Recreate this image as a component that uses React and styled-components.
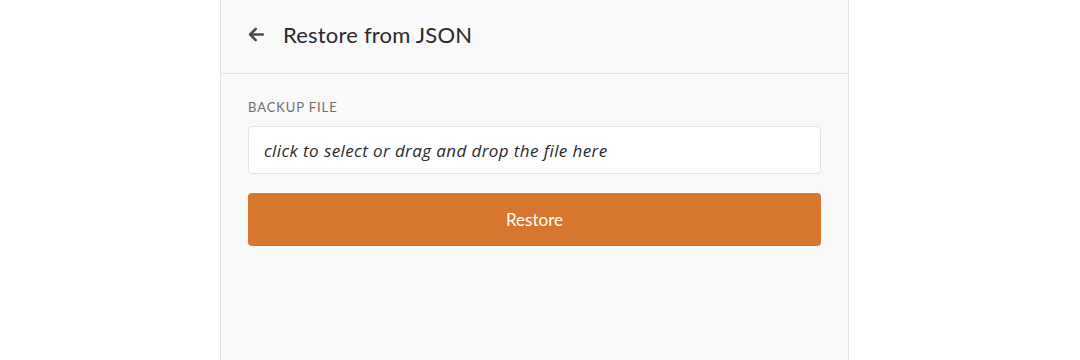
import React from "react";
import styled, { createGlobalStyle } from "styled-components";

const GlobalStyle = createGlobalStyle`
  html, body {
    margin: 0;
    padding: 0;
    background: #ffffff;
    font-family: "Lato", "Open Sans", sans-serif;
  }
`;

const Page = styled.div`
  height: 360px;
  display: flex;
  padding-left: 220px;
`;

const Panel = styled.div`
  width: 627px;
  height: 100%;
  background: #f9f9f9;
  border-left: 1px solid #e2e3ef;
  border-right: 1px solid #e2e3ef;
  display: flex;
  flex-direction: column;
`;

const Header = styled.div`
  height: 74px;
  box-sizing: border-box;
  border-bottom: 1px solid #e2e3ef;
  display: flex;
  align-items: center;
  padding: 0 26px 4px;
  gap: 17px;
`;

const BackArrow = styled.svg`
  width: 19px;
  height: 19px;
  color: #4a4a4a;
  cursor: pointer;
`;

const Title = styled.h1`
  margin: 0;
  font-size: 22px;
  font-weight: 400;
  color: #2a2a2a;
  letter-spacing: 0.2px;
`;

const Body = styled.div`
  padding: 25px 27px;
  display: flex;
  flex-direction: column;
`;

const Label = styled.label`
  font-size: 13px;
  color: #6e6e6e;
  letter-spacing: 0.9px;
  text-transform: uppercase;
  margin-bottom: 11px;
`;

const DropZone = styled.div`
  height: 48px;
  box-sizing: border-box;
  background: #ffffff;
  border: 1px solid #e2e4ec;
  border-radius: 4px;
  display: flex;
  align-items: center;
  padding: 0 15px;
  font-family: "Open Sans", "Lato", sans-serif;
  font-size: 17px;
  font-style: italic;
  letter-spacing: 0.4px;
  color: #2a2a2a;
  cursor: pointer;
`;

const RestoreButton = styled.button`
  margin-top: 19px;
  height: 53px;
  border: none;
  border-radius: 4px;
  background: #d9762d;
  color: #ffffff;
  font-family: inherit;
  font-size: 17px;
  cursor: pointer;
`;

const App = () => (
  <React.Fragment>
    <GlobalStyle />
    <Page>
      <Panel>
        <Header>
          <BackArrow viewBox="0 0 24 24" fill="none" stroke="currentColor" strokeWidth="3.2" strokeLinecap="round" strokeLinejoin="round">
            <path d="M20 12H5" />
            <path d="M11 5l-7 7 7 7" />
          </BackArrow>
          <Title>Restore from JSON</Title>
        </Header>
        <Body>
          <Label>Backup file</Label>
          <DropZone>click to select or drag and drop the file here</DropZone>
          <RestoreButton>Restore</RestoreButton>
        </Body>
      </Panel>
    </Page>
  </React.Fragment>
);

export default App;
